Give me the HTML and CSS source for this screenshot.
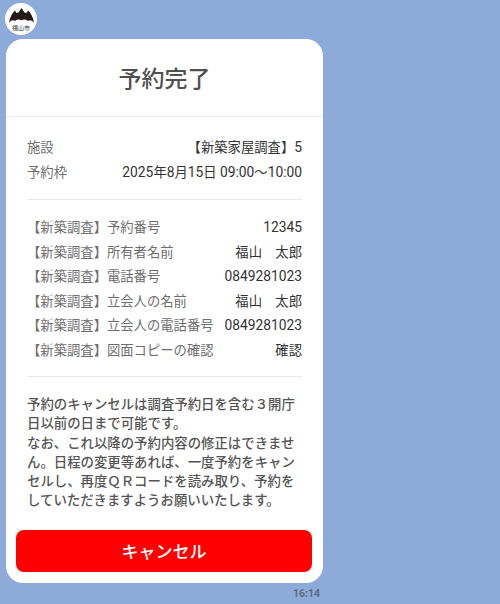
FILE: index.html
```
<!DOCTYPE html>
<html lang="ja">
<head>
<meta charset="utf-8">
<title>予約完了</title>
<link rel="stylesheet" href="styles.css">
</head>
<body>
<div class="chat">
  <div class="avatar">
    <svg class="bat" viewBox="0 0 25 15" aria-hidden="true">
      <path d="M0 15C1 9 3 5 6 2.500L7.500 5 9.500 4.500 12.500 0 15.500 4.500 17.500 5 19 2.500C22 5 24 9 25 15 23 12 21 11.500 19 13 17 11 14.500 11 12.500 12.500 10.500 11 8 11 6 13 4 11.500 2 12 0 15Z"/>
    </svg>
    <span class="avatar-name">福山市</span>
  </div>
  <div class="card">
    <header class="card-head"><h1>予約完了</h1></header>
    <section class="card-body">
      <div class="rows">
        <div class="row"><span class="label">施設</span><span class="value">【新築家屋調査】<span class="num">5</span></span></div>
        <div class="row"><span class="label">予約枠</span><span class="value"><span class="num">2025</span>年<span class="num">8</span>月<span class="num">15</span>日 <span class="num">09:00</span>〜<span class="num">10:00</span></span></div>
      </div>
      <hr class="rule">
      <div class="rows answers">
        <div class="row"><span class="label">【新築調査】予約番号</span><span class="value num">12345</span></div>
        <div class="row"><span class="label">【新築調査】所有者名前</span><span class="value">福山　太郎</span></div>
        <div class="row"><span class="label">【新築調査】電話番号</span><span class="value num">0849281023</span></div>
        <div class="row"><span class="label">【新築調査】立会人の名前</span><span class="value">福山　太郎</span></div>
        <div class="row"><span class="label">【新築調査】立会人の電話番号</span><span class="value num">0849281023</span></div>
        <div class="row"><span class="label">【新築調査】図面コピーの確認</span><span class="value">確認</span></div>
      </div>
      <hr class="rule rule-end">
      <p class="note">予約のキャンセルは調査予約日を含む３開庁日以前の日まで可能です。<br>なお、これ以降の予約内容の修正はできません。日程の変更等あれば、一度予約をキャンセルし、再度ＱＲコードを読み取り、予約をしていただきますようお願いいたします。</p>
    </section>
    <div class="card-foot"><button class="cancel" type="button">キャンセル</button></div>
  </div>
  <div class="time">16:14</div>
</div>
</body>
</html>
```
FILE: styles.css
```
* { box-sizing: border-box; }
html, body { margin: 0; height: 100%; }
body {
  background: #8cabd9;
  font-family: Roboto, "Noto Sans CJK JP", sans-serif;
  font-size: 13.33px;
  overflow: hidden;
}
.chat { padding: 3px 0 0 6px; width: 323px; }
.avatar {
  width: 32px; height: 32px; margin-left: -1px; margin-bottom: 4px;
  background: #fff; border-radius: 50%;
  display: flex; flex-direction: column; align-items: center;
  padding-top: 5px;
}
.bat { width: 25px; height: 15px; fill: #241a18; flex: none; display: block; }
.avatar-name { font-size: 6px; line-height: 6px; color: #333; margin-top: 2px; white-space: nowrap; }
.card { background: #fff; border-radius: 17px; width: 317px; height: 544px; overflow: hidden; }
.card-head { height: 78px; padding-top: 3px; border-bottom: 1px solid #e9ebee; display: flex; align-items: center; justify-content: center; }
h1 { margin: 0; font-size: 23px; font-weight: 500; color: #505050; line-height: 1; }
.card-body { padding: 21px 21px 0; }
.rows { display: flex; flex-direction: column; gap: 5px; }
.row { display: flex; justify-content: space-between; line-height: 19.5px; white-space: nowrap; }
.label { color: #6e6e6e; }
.value { color: #333; }
.num { font-size: 13.8px; }
.rule { border: 0; border-top: 1px solid #e6e8ec; margin: 17px 0 18px; }
.rule-end { margin-top: 16px; }
.note { margin: 15px 0 0; font-size: 13.4px; color: #555; font-weight: 500; line-height: 19.3px; }
.card-foot { padding: 19px 11px 0 10px; }
.cancel {
  display: block; width: 100%; height: 42px; border: 0; border-radius: 8px;
  background: #f00; color: #fff; font: 500 17px Roboto, "Noto Sans CJK JP", sans-serif;
}
.time { text-align: right; padding: 5px 3px 0 0; font-size: 10.5px; font-weight: 700; color: #5d6a80; line-height: 12px; }
```
